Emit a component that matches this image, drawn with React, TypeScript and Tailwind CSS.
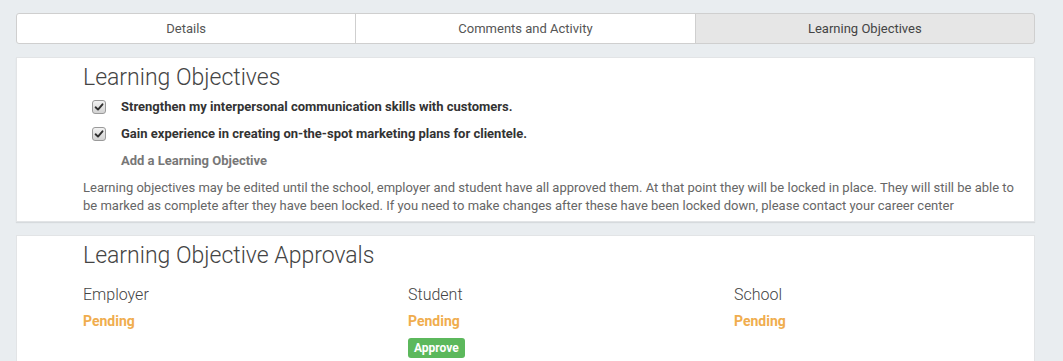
// Learning objectives tab of a placement record

const tabs = ['Details', 'Comments and Activity', 'Learning Objectives']

const objectives = [
  'Strengthen my interpersonal communication skills with customers.',
  'Gain experience in creating on-the-spot marketing plans for clientele.'
]

const approvals = [
  { role: 'Employer', status: 'Pending', canApprove: false },
  { role: 'Student', status: 'Pending', canApprove: true },
  { role: 'School', status: 'Pending', canApprove: false }
]

function CheckedBox() {
  return (
    <span className="flex h-[14px] w-[14px] items-center justify-center rounded-[3px] border border-[#9a9a9a] bg-gradient-to-b from-[#f2f2f2] to-[#d2d2d2]">
      <svg viewBox="0 0 10 10" className="h-[10px] w-[10px]">
        <path d="M1.6 5.3 L4 7.6 L8.5 2.3" fill="none" stroke="#2f2f2f" strokeWidth="1.9" strokeLinecap="round" strokeLinejoin="round" />
      </svg>
    </span>
  )
}

export default function App() {
  return (
    <div className="min-h-[361px] bg-[#e9edf0] pl-4 pr-7 pt-[13px] font-['Roboto',sans-serif] text-[#555]">
      {/* Tabs */}
      <div className="flex h-[31px]">
        {tabs.map((tab, i) => {
          const active = i === tabs.length - 1
          return (
            <div
              key={tab}
              className={`flex flex-1 items-center justify-center border border-[#cfcfcf] text-[13px] ${
                i > 0 ? '-ml-px' : ''
              } ${i === 0 ? 'rounded-l-[3px]' : ''} ${
                active ? 'rounded-r-[3px] bg-[#e6e6e6] text-[#444]' : 'bg-white'
              }`}
            >
              {tab}
            </div>
          )
        })}
      </div>

      {/* Objectives */}
      <div className="mt-[13px] border border-[#e2e4e6] bg-white pb-[6px] pl-[66px] pr-4 pt-[5px] shadow-[0_1px_1px_rgba(0,0,0,0.08)]">
        <h2 className="text-[23px] font-light leading-[30px] text-[#444]">Learning Objectives</h2>
        {objectives.map((text) => (
          <div key={text} className="flex h-[27px] items-center gap-[15px] pl-[9px]">
            <CheckedBox />
            <span className="text-[13px] font-bold text-[#333]">{text}</span>
          </div>
        ))}
        <div className="flex h-[27px] items-center pl-[38px] text-[13px] font-bold text-[#777]">
          Add a Learning Objective
        </div>
        <p className="mt-[5px] text-[13px] leading-[18px] text-[#666]">
          Learning objectives may be edited until the school, employer and student have all approved them. At that point they will be locked in place. They will still be able to be marked as complete after they have been locked. If you need to make changes after these have been locked down, please contact your career center
        </p>
      </div>

      {/* Approvals */}
      <div className="mt-[13px] border border-[#e2e4e6] bg-white pb-4 pl-[66px] pt-[5px]">
        <h2 className="text-[23px] font-light leading-[30px] text-[#444]">Learning Objective Approvals</h2>
        <div className="mt-[13px] grid grid-cols-[325px_326px_1fr]">
          {approvals.map((a) => (
            <div key={a.role}>
              <div className="text-[16px] font-light leading-[22px] text-[#444]">{a.role}</div>
              <div className="mt-[5px] text-[14px] font-bold leading-[20px] text-[#f0ad4e]">{a.status}</div>
              {a.canApprove && (
                <button className="mt-[7px] h-[20px] rounded-[3px] bg-[#5cb85c] px-[6px] text-[12px] font-bold leading-[20px] text-white">
                  Approve
                </button>
              )}
            </div>
          ))}
        </div>
      </div>
    </div>
  )
}
